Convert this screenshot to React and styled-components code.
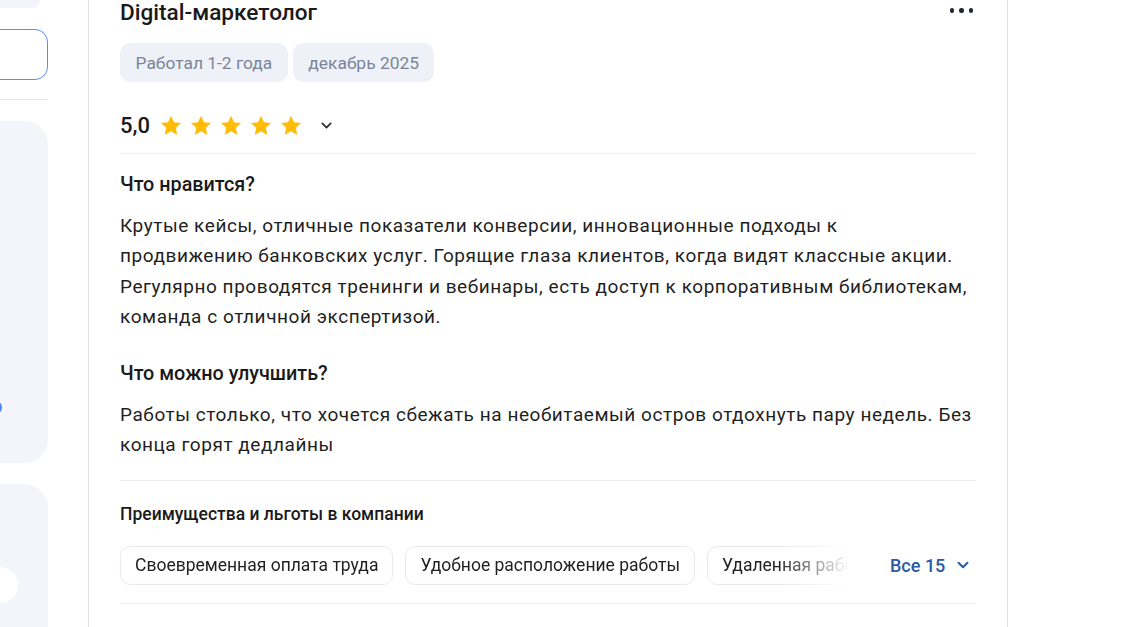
import React from 'react';
import styled, { createGlobalStyle } from 'styled-components';

const GlobalStyle = createGlobalStyle`
  html, body {
    margin: 0;
    padding: 0;
    background: #fff;
    font-family: Roboto, "Noto Sans", Arial, sans-serif;
    color: #1f1f1f;
    overflow: hidden;
  }
`;

const Page = styled.div`
  display: flex;
  align-items: stretch;
  gap: 40px;
  height: 627px;
`;

const Sidebar = styled.aside`
  width: 48px;
  flex-shrink: 0;
  overflow: hidden;
  display: flex;
  flex-direction: column;
  align-items: flex-end;
`;

const TopBlock = styled.div`
  width: 260px;
  height: 8px;
  margin-right: 8px;
  background: #f3f5fa;
  border-radius: 0 0 16px 0;
  flex-shrink: 0;
`;

const SearchBox = styled.div`
  width: 280px;
  height: 51px;
  margin-top: 21px;
  box-sizing: border-box;
  border: 1px solid #5b8ef0;
  border-radius: 13px;
  flex-shrink: 0;
`;

const SideDivider = styled.div`
  width: 280px;
  height: 1px;
  margin-top: 19px;
  background: #e3e6ec;
  flex-shrink: 0;
`;

const SidePanel = styled.div`
  width: 280px;
  height: ${p => p.$h}px;
  margin-top: ${p => p.$mt}px;
  box-sizing: border-box;
  background: #f3f5fa;
  border-radius: 24px;
  flex-shrink: 0;
  display: flex;
  flex-direction: column;
  align-items: flex-end;
  justify-content: ${p => (p.$bottom ? 'flex-end' : 'flex-start')};
  padding: ${p => p.$pad};
`;

const BlueMark = styled.div`
  width: 24px;
  height: 15px;
  border-radius: 8px;
  background: #4f86e6;
`;

const WhiteDot = styled.div`
  width: 36px;
  height: 36px;
  border-radius: 50%;
  background: #fff;
`;

const Card = styled.main`
  width: 920px;
  box-sizing: border-box;
  border-left: 1px solid #dde2ec;
  border-right: 1px solid #dde2ec;
  padding: 0 31px;
  background: #fff;
`;

const HeaderRow = styled.div`
  display: flex;
  justify-content: space-between;
  align-items: flex-start;
`;

const Title = styled.h2`
  margin: 0;
  font-size: 22.6px;
  line-height: 25px;
  font-weight: 500;
  color: #1a1a1a;
`;

const Dots = styled.div`
  display: flex;
  gap: 5px;
  margin-top: 8px;
  margin-right: 3px;

  span {
    width: 4.5px;
    height: 4.5px;
    border-radius: 50%;
    background: #1f2430;
  }
`;

const Tags = styled.div`
  display: flex;
  gap: 5px;
  margin-top: 18px;
`;

const Tag = styled.span`
  display: inline-flex;
  align-items: center;
  height: 39px;
  padding: 0 15.5px;
  border-radius: 10px;
  background: #eef1f8;
  color: #7b8598;
  font-size: 17.4px;
`;

const RatingRow = styled.div`
  display: flex;
  align-items: center;
  height: 32px;
  margin-top: 27px;
`;

const Score = styled.span`
  font-size: 22px;
  font-weight: 500;
  color: #1a1a1a;
  margin-right: 10px;
`;

const Stars = styled.div`
  display: flex;
  gap: 8px;
  margin-right: 18px;
`;

const Divider = styled.div`
  height: 1px;
  background: #eef0f4;
  margin-top: ${p => p.$mt}px;
`;

const SectionTitle = styled.h3`
  margin: ${p => p.$mt}px 0 0 0;
  font-size: ${p => (p.$small ? 17.5 : 19.8)}px;
  line-height: ${p => (p.$small ? 20 : 24)}px;
  font-weight: 500;
  color: #1a1a1a;
`;

const Text = styled.p`
  margin: ${p => p.$mt}px 0 0 0;
  font-size: 19px;
  letter-spacing: 0.55px;
  line-height: 30.3px;
  color: #1f1f1f;
  white-space: pre-line;
`;

const BenefitsRow = styled.div`
  display: flex;
  align-items: center;
  margin-top: 22px;
`;

const ChipStrip = styled.div`
  width: 730px;
  display: flex;
  gap: 12px;
  overflow: hidden;
  flex-shrink: 0;
  -webkit-mask-image: linear-gradient(to right, #000 90%, transparent 100%);
  mask-image: linear-gradient(to right, #000 90%, transparent 100%);
`;

const Chip = styled.span`
  display: inline-flex;
  align-items: center;
  height: 39px;
  box-sizing: border-box;
  padding: 0 14px;
  border: 1px solid #e6e9f2;
  border-radius: 10px;
  font-size: 17.5px;
  color: #1f1f1f;
  white-space: nowrap;
  flex-shrink: 0;
`;

const MoreLink = styled.button`
  margin-left: 40px;
  display: flex;
  align-items: center;
  gap: 11px;
  border: none;
  background: none;
  padding: 0;
  font-family: inherit;
  font-size: 18px;
  font-weight: 500;
  color: #2c5ba4;
  cursor: pointer;
`;

const Star = () => (
  <svg width="22" height="21" viewBox="0 0 24 23">
    <path d="M12 0.8l3.3 7.1 7.8 0.9-5.8 5.3 1.6 7.7L12 17.9l-6.9 3.9 1.6-7.7L0.9 8.8l7.8-0.9z" fill="#ffbd0a" />
  </svg>
);

const Chevron = ({ color = '#333', size = 13 }) => (
  <svg width={size} height={size} viewBox="0 0 14 14">
    <path d="M2.5 4.8L7 9.3l4.5-4.5" fill="none" stroke={color} strokeWidth="2" strokeLinecap="round" strokeLinejoin="round" />
  </svg>
);

const benefits = [
  'Своевременная оплата труда',
  'Удобное расположение работы',
  'Удаленная работа',
];

const likes =
  'Крутые кейсы, отличные показатели конверсии, инновационные подходы к\n' +
  'продвижению банковских услуг. Горящие глаза клиентов, когда видят классные акции. ' +
  'Регулярно проводятся тренинги и вебинары, есть доступ к корпоративным библиотекам, ' +
  'команда с отличной экспертизой.';

export default function App() {
  return (
    <>
      <GlobalStyle />
      <Page>
        <Sidebar>
          <TopBlock />
          <SearchBox />
          <SideDivider />
          <SidePanel $h={342} $mt={21} $bottom $pad="0 46px 48px 0">
            <BlueMark />
          </SidePanel>
          <SidePanel $h={200} $mt={21} $pad="83px 30px 0 0">
            <WhiteDot />
          </SidePanel>
        </Sidebar>

        <Card>
          <HeaderRow>
            <Title>Digital-маркетолог</Title>
            <Dots><span /><span /><span /></Dots>
          </HeaderRow>

          <Tags>
            <Tag>Работал 1-2 года</Tag>
            <Tag>декабрь 2025</Tag>
          </Tags>

          <RatingRow>
            <Score>5,0</Score>
            <Stars>
              {[0, 1, 2, 3, 4].map(i => <Star key={i} />)}
            </Stars>
            <Chevron />
          </RatingRow>

          <Divider $mt={12} />

          <SectionTitle $mt={19}>Что нравится?</SectionTitle>
          <Text $mt={14}>{likes}</Text>

          <SectionTitle $mt={30}>Что можно улучшить?</SectionTitle>
          <Text $mt={14}>
            Работы столько, что хочется сбежать на необитаемый остров отдохнуть пару недель. Без конца горят дедлайны
          </Text>

          <Divider $mt={19} />

          <SectionTitle $small $mt={23}>Преимущества и льготы в компании</SectionTitle>

          <BenefitsRow>
            <ChipStrip>
              {benefits.map(b => <Chip key={b}>{b}</Chip>)}
            </ChipStrip>
            <MoreLink>
              Все 15
              <Chevron color="#2c5ba4" size={14} />
            </MoreLink>
          </BenefitsRow>

          <Divider $mt={18} />
        </Card>
      </Page>
    </>
  );
}
